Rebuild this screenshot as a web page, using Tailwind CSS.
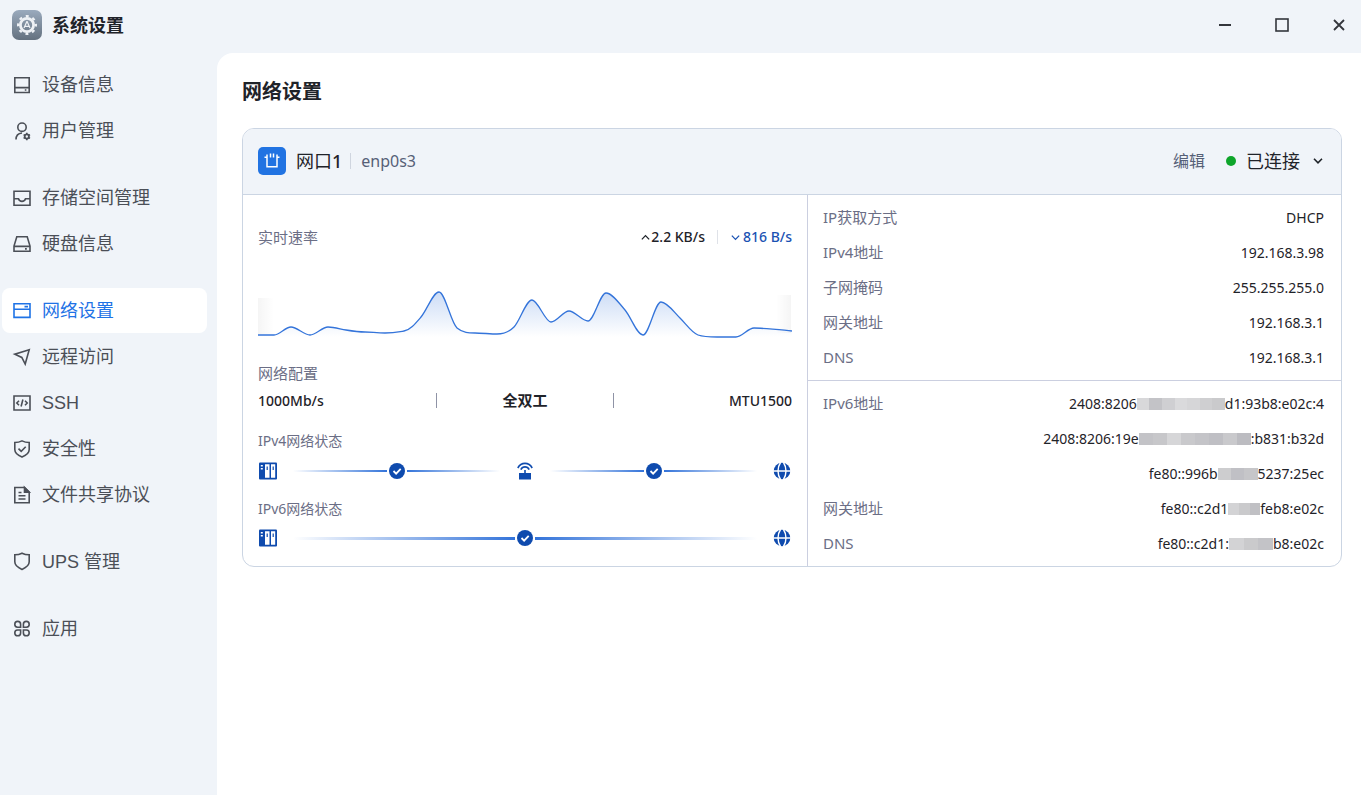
<!DOCTYPE html>
<html lang="zh-CN">
<head>
  <meta charset="UTF-8" />
  <meta name="viewport" content="width=device-width, initial-scale=1.0" />
  <title>系统设置</title>
  <script src="https://cdn.jsdelivr.net/npm/@tailwindcss/browser@4"></script>
</head>
<body class="min-h-screen flex flex-col bg-[#f0f4f9] text-[#1f2329] font-['Noto_Sans','Noto_Sans_CJK_SC',sans-serif]">

  <!-- 标题栏 -->
  <header class="h-[53px] shrink-0 flex items-center justify-between pl-3 pb-1">
    <div class="flex items-center gap-[10px]">
      <svg class="size-[30px]" viewBox="0 0 30 30">
        <defs>
          <linearGradient id="logoBg" x1="0" y1="0" x2="0" y2="1">
            <stop offset="0" stop-color="#9aaabd" />
            <stop offset="1" stop-color="#64717f" />
          </linearGradient>
        </defs>
        <rect width="30" height="30" rx="7" fill="url(#logoBg)" />
        <circle cx="15" cy="15" r="6.6" fill="none" stroke="#eef1f5" stroke-width="2.8" />
        <circle cx="15" cy="15" r="8.9" fill="none" stroke="#eef1f5" stroke-width="2.2" stroke-dasharray="3 3.99" stroke-dashoffset="1.5" />
        <path d="M15 11.2 12 18M15 11.2 18 18M12.8 16.4h4.4" fill="none" stroke="#eef1f5" stroke-width="1.2" />
      </svg>
      <span class="text-lg leading-6 font-bold">系统设置</span>
    </div>
    <div class="flex items-center gap-[13px] text-[#33363c]">
      <button class="w-11 h-8 flex items-center justify-center" aria-label="最小化">
        <svg class="size-[14px]" viewBox="0 0 14 14" stroke="currentColor" stroke-width="2"><path d="M1 7h12" /></svg>
      </button>
      <button class="w-11 h-8 flex items-center justify-center" aria-label="最大化">
        <svg class="size-[14px]" viewBox="0 0 14 14" fill="none" stroke="currentColor" stroke-width="1.6"><rect x="1" y="1" width="12" height="12" /></svg>
      </button>
      <button class="w-11 h-8 flex items-center justify-center" aria-label="关闭">
        <svg class="size-[14px]" viewBox="0 0 14 14" fill="none" stroke="currentColor" stroke-width="1.8"><path d="m2 2 10 10M12 2 2 12" /></svg>
      </button>
    </div>
  </header>

  <div class="flex-1 flex">
    <!-- 侧边栏 -->
    <nav class="w-[217px] shrink-0 pt-[9px] pl-[2px] pr-[10px] flex flex-col gap-[22px] text-lg text-[#4b4f57] font-['Liberation_Sans','Noto_Sans_CJK_SC',sans-serif]">
      <div class="flex flex-col gap-px">
        <a href="#" class="h-[45px] px-[10px] flex items-center gap-[10px] rounded-lg">
          <svg class="size-5" viewBox="0 0 20 20" fill="none" stroke="currentColor" stroke-width="1.6"><path d="M2.8 2.8h14.4v14.7H2.8zM2.8 12.6h14.4M12.8 15h1.6" /></svg>
          设备信息
        </a>
        <a href="#" class="h-[45px] px-[10px] flex items-center gap-[10px] rounded-lg">
          <svg class="size-5" viewBox="0 0 20 20" fill="none" stroke="currentColor" stroke-width="1.6"><circle cx="10" cy="6.2" r="4.2" /><path d="M4 18.5c0-4 2.5-6.2 6-6.5" /><circle cx="14.8" cy="15.5" r="2.1" stroke-width="1.8" /><path d="M14.8 11.8v7.4M11.6 13.65l6.4 3.7M18 13.65l-6.4 3.7" stroke-dasharray="1.3 4.8" /></svg>
          用户管理
        </a>
      </div>
      <div class="flex flex-col gap-px">
        <a href="#" class="h-[45px] px-[10px] flex items-center gap-[10px] rounded-lg">
          <svg class="size-5" viewBox="0 0 20 20" fill="none" stroke="currentColor" stroke-width="1.6"><path d="M2 3.2h16v14H2zM2 10.8h4.5c.5 1.6 1.800 2.600 3.500 2.600s3-1 3.500-2.600H18" /></svg>
          存储空间管理
        </a>
        <a href="#" class="h-[45px] px-[10px] flex items-center gap-[10px] rounded-lg">
          <svg class="size-5" viewBox="0 0 20 20" fill="none" stroke="currentColor" stroke-width="1.6"><path d="M4.8 2.800h10.400L18 12v5.200H2V12zM2 12.400h16M13 14.900h1.800" /></svg>
          硬盘信息
        </a>
      </div>
      <div class="flex flex-col gap-px">
        <a href="#" class="h-[45px] px-[10px] flex items-center gap-[10px] rounded-lg bg-white text-[#1f73e6]" aria-current="page">
          <svg class="size-5" viewBox="0 0 20 20" fill="none" stroke="currentColor" stroke-width="1.6"><path d="M2 2.800h16v13.600H2zM2 8.300h16M12.500 5.600H16" /></svg>
          网络设置
        </a>
        <a href="#" class="h-[45px] px-[10px] flex items-center gap-[10px] rounded-lg">
          <svg class="size-5" viewBox="0 0 20 20" fill="none" stroke="currentColor" stroke-width="1.6"><path d="M17.2 2.800 2.800 7.200l7 3.200 3.400 6.600z" /></svg>
          远程访问
        </a>
        <a href="#" class="h-[45px] px-[10px] flex items-center gap-[10px] rounded-lg">
          <svg class="size-5" viewBox="0 0 20 20" fill="none" stroke="currentColor" stroke-width="1.6"><path d="M2 3h16v14H2z" /><path d="M7 7.800 4.800 10 7 12.200M13 7.800l2.200 2.200-2.200 2.200M10.900 6.500l-1.800 7" /></svg>
          SSH
        </a>
        <a href="#" class="h-[45px] px-[10px] flex items-center gap-[10px] rounded-lg">
          <svg class="size-5" viewBox="0 0 20 20" fill="none" stroke="currentColor" stroke-width="1.6"><path d="M10 1.900c2.200 1.100 4.600 1.600 7.200 1.600v7c0 3.400-3 5.800-7.200 7.600-4.200-1.800-7.200-4.200-7.200-7.600v-7c2.600 0 5-.5 7.200-1.600z" /><path d="m6.500 9.600 2.700 2.700 4.500-4.500" /></svg>
          安全性
        </a>
        <a href="#" class="h-[45px] px-[10px] flex items-center gap-[10px] rounded-lg">
          <svg class="size-5" viewBox="0 0 20 20" fill="none" stroke="currentColor" stroke-width="1.6"><path d="M2.800 2.500h9.700l4.700 4.700v10.600H2.800zM6.500 7.500h3M6.500 10.800h7M6.500 14h7" /><path d="M12.500 2.500v4.700h4.700z" fill="currentColor" /></svg>
          文件共享协议
        </a>
      </div>
      <a href="#" class="h-[45px] px-[10px] flex items-center gap-[10px] rounded-lg">
        <svg class="size-5" viewBox="0 0 20 20" fill="none" stroke="currentColor" stroke-width="1.6"><path d="M10 1.200c2.200 1.100 4.600 1.600 7.200 1.600v7c0 3.400-3 5.800-7.200 7.600-4.200-1.800-7.200-4.200-7.200-7.600v-7c2.600 0 5-.5 7.200-1.600z" /></svg>
        UPS 管理
      </a>
      <a href="#" class="h-[45px] px-[10px] flex items-center gap-[10px] rounded-lg">
        <svg class="size-5" viewBox="0 0 20 20" fill="none" stroke="currentColor" stroke-width="1.6"><path d="M8.600 8.200H5.600a2.900 2.900 0 1 1 3-2.900zM11.400 8.200h3a2.900 2.900 0 1 0-3-2.900zM8.600 11H5.600a2.900 2.900 0 1 0 3 2.900zM11.400 11h3a2.900 2.900 0 1 1-3 2.900z" /></svg>
        应用
      </a>
    </nav>

    <!-- 主内容 -->
    <main class="flex-1 min-w-0 bg-white rounded-tl-2xl pl-[25px] pr-[19px] pt-6">
      <h1 class="text-xl leading-[30px] font-bold">网络设置</h1>

      <section class="mt-[21px] border border-[#cbd5e3] rounded-xl overflow-hidden">
        <!-- 网口标题 -->
        <div class="h-[66px] pl-[15px] pr-[17px] pb-px flex items-center justify-between bg-[#f0f4f9] border-b border-[#cbd5e3]">
          <div class="flex items-center">
            <svg class="size-7" viewBox="0 0 28 28" fill="none" stroke="#fff" stroke-width="1.5">
              <rect width="28" height="28" rx="5" fill="#2173e2" stroke="none" />
              <path d="M6.500 10.300H9v9.400h10v-9.400h2.500M9 10.300V7.500M19 10.300V7.500M12.500 6.500v4M15.500 6.500v4" />
            </svg>
            <h2 class="ml-[10px] text-lg">网口<span class="font-medium">1</span></h2>
            <span class="ml-[8px] h-4 border-l border-[#cfd5df]"></span>
            <span class="ml-[10px] text-base text-[#566077]">enp0s3</span>
          </div>
          <div class="flex items-center">
            <button class="text-base text-[#566077]">编辑</button>
            <span class="ml-[21px] size-[10px] rounded-full bg-[#0ea52b]"></span>
            <button class="ml-[10px] flex items-center gap-3 text-lg">
              已连接
              <svg class="size-3" viewBox="0 0 12 12" fill="none" stroke="currentColor" stroke-width="1.6"><path d="m2 3.800 4 4 4-4" /></svg>
            </button>
          </div>
        </div>

        <div class="grid grid-cols-[565fr_533fr]">
          <!-- 左侧：速率与状态 -->
          <div class="px-[15px] pt-[30px] pb-[18px] border-r border-[#cbcfe0]">
            <div class="h-6 flex items-center justify-between">
              <span class="text-[15px] text-[#6b6e85]">实时速率</span>
              <div class="flex items-center text-sm font-medium">
                <svg class="size-[11px]" viewBox="0 0 12 12" fill="none" stroke="currentColor" stroke-width="1.4"><path d="m2 8 4-4 4 4" /></svg>
                <span>2.2 KB/s</span>
                <span class="mx-[12px] h-[14px] border-l border-[#dfe2e8]"></span>
                <span class="flex items-center gap-[2px] text-[#1a52b3]">
                  <svg class="size-[11px]" viewBox="0 0 12 12" fill="none" stroke="currentColor" stroke-width="1.4"><path d="m2 4 4 4 4-4" /></svg>
                  816 B/s
                </span>
              </div>
            </div>

            <!-- 速率曲线 -->
            <svg class="mt-9 w-full h-[60px]" viewBox="0 0 534 60" preserveAspectRatio="none">
              <defs>
                <linearGradient id="area" gradientUnits="userSpaceOnUse" x1="0" y1="5" x2="0" y2="52">
                  <stop offset="0" stop-color="#3474da" stop-opacity=".26" />
                  <stop offset="1" stop-color="#3474da" stop-opacity="0" />
                </linearGradient>
                <linearGradient id="fadeL">
                  <stop offset="0" stop-color="#000" stop-opacity=".04" />
                  <stop offset="1" stop-color="#000" stop-opacity="0" />
                </linearGradient>
                <linearGradient id="fadeR">
                  <stop offset="0" stop-color="#000" stop-opacity="0" />
                  <stop offset="1" stop-color="#000" stop-opacity=".04" />
                </linearGradient>
              </defs>
              <rect x="0" y="13" width="16" height="36" fill="url(#fadeL)" />
              <rect x="518" y="10" width="15" height="38" fill="url(#fadeR)" />
              <path fill="url(#area)" d="M0 50H16C22 50 27 42 33 42S46 50 52 50 64 42 70 42 82 44 88 45 101 47 107 47 119 48 127 48 140 47 146 46 157 39 163 32 175 7 181 7 193 38 199 43 211 48 217 48 233 49 239 49 250 48 256 42 268 15 274 15 287 37 293 37 305 26 311 26 324 36 330 36 342 8 348 8 361 18 367 25 379 50 385 50 397 17 403 17 416 27 422 33 434 48 440 50 453 52 459 52 472 52 478 52 490 43 496 43 527 45 534 46V60H0z" />
              <path fill="none" stroke="#3474da" stroke-width="1.3" d="M0 50H16C22 50 27 42 33 42S46 50 52 50 64 42 70 42 82 44 88 45 101 47 107 47 119 48 127 48 140 47 146 46 157 39 163 32 175 7 181 7 193 38 199 43 211 48 217 48 233 49 239 49 250 48 256 42 268 15 274 15 287 37 293 37 305 26 311 26 324 36 330 36 342 8 348 8 361 18 367 25 379 50 385 50 397 17 403 17 416 27 422 33 434 48 440 50 453 52 459 52 472 52 478 52 490 43 496 43 527 45 534 46" />
            </svg>

            <h3 class="mt-[15px] text-[15px] leading-[27px] text-[#6b6e85]">网络配置</h3>
            <div class="h-[27px] grid grid-cols-3 items-center text-sm font-medium">
              <span>1000Mb/s</span>
              <span class="h-[15px] flex items-center justify-center border-x border-[#8f93a6] text-[15px] font-bold">全双工</span>
              <span class="text-right">MTU1500</span>
            </div>

            <h3 class="mt-[15px] text-sm leading-6 text-[#6b6e85]">IPv4网络状态</h3>
            <div class="mt-2 h-5 flex items-center text-[#0f4bae]">
              <svg class="size-5" viewBox="0 0 20 20"><use href="#nas" /></svg>
              <span class="ml-[15px] flex-1 h-[2px] bg-linear-to-r from-transparent to-[#3474da]"></span>
              <svg class="mx-[2px] size-4" viewBox="0 0 16 16"><use href="#ok" /></svg>
              <span class="mr-[15px] flex-1 h-[2px] bg-linear-to-l from-transparent to-[#3474da]"></span>
              <svg class="size-5" viewBox="0 0 20 20"><use href="#router" /></svg>
              <span class="ml-[15px] flex-1 h-[2px] bg-linear-to-r from-transparent to-[#3474da]"></span>
              <svg class="mx-[2px] size-4" viewBox="0 0 16 16"><use href="#ok" /></svg>
              <span class="mr-[15px] flex-1 h-[2px] bg-linear-to-l from-transparent to-[#3474da]"></span>
              <svg class="size-5" viewBox="0 0 20 20"><use href="#globe" /></svg>
            </div>

            <h3 class="mt-4 text-sm leading-6 text-[#6b6e85]">IPv6网络状态</h3>
            <div class="mt-[7px] h-5 flex items-center text-[#0f4bae]">
              <svg class="size-5" viewBox="0 0 20 20"><use href="#nas" /></svg>
              <span class="ml-[15px] flex-1 h-[3px] bg-linear-to-r from-transparent to-[#3474da]"></span>
              <svg class="mx-[2px] size-4" viewBox="0 0 16 16"><use href="#ok" /></svg>
              <span class="mr-[15px] flex-1 h-[3px] bg-linear-to-l from-transparent to-[#3474da]"></span>
              <svg class="size-5" viewBox="0 0 20 20"><use href="#globe" /></svg>
            </div>
          </div>

          <!-- 右侧：地址信息 -->
          <div class="text-sm">
            <dl class="py-[5px] pl-[15px] pr-[17px] border-b border-[#cbcfe0]">
              <div class="h-[35px] flex items-center justify-between"><dt class="text-[15px] text-[#6b6e85]">IP获取方式</dt><dd>DHCP</dd></div>
              <div class="h-[35px] flex items-center justify-between"><dt class="text-[15px] text-[#6b6e85]">IPv4地址</dt><dd>192.168.3.98</dd></div>
              <div class="h-[35px] flex items-center justify-between"><dt class="text-[15px] text-[#6b6e85]">子网掩码</dt><dd>255.255.255.0</dd></div>
              <div class="h-[35px] flex items-center justify-between"><dt class="text-[15px] text-[#6b6e85]">网关地址</dt><dd>192.168.3.1</dd></div>
              <div class="h-[35px] flex items-center justify-between"><dt class="text-[15px] text-[#6b6e85]">DNS</dt><dd>192.168.3.1</dd></div>
            </dl>
            <!-- IPv6 地址中段打码 -->
            <dl class="py-[5px] pl-[15px] pr-[17px]">
              <div class="h-[35px] flex items-center justify-between">
                <dt class="text-[15px] text-[#6b6e85]">IPv6地址</dt>
                <dd class="flex items-center">2408:8206<span class="flex h-3 w-[88px]"><i class="flex-1 bg-[#d8d8da]"></i><i class="flex-1 bg-[#c3c3c7]"></i><i class="flex-1 bg-[#cfcfd2]"></i><i class="flex-1 bg-[#dadadc]"></i><i class="flex-1 bg-[#d6d6d8]"></i><i class="flex-1 bg-[#cfcfd1]"></i><i class="flex-1 bg-[#cacacc]"></i></span>d1:93b8:e02c:4</dd>
              </div>
              <div class="h-[35px] flex items-center justify-end">
                <dd class="flex items-center">2408:8206:19e<span class="flex h-3 w-28"><i class="flex-1 bg-[#c3c3c7]"></i><i class="flex-1 bg-[#c7c7ca]"></i><i class="flex-1 bg-[#d6d6d8]"></i><i class="flex-1 bg-[#c9c9cc]"></i><i class="flex-1 bg-[#c4c4c8]"></i><i class="flex-1 bg-[#bfbfc4]"></i><i class="flex-1 bg-[#c9c9cc]"></i><i class="flex-1 bg-[#bcbcc1]"></i></span>:b831:b32d</dd>
              </div>
              <div class="h-[35px] flex items-center justify-end">
                <dd class="flex items-center">fe80::996b<span class="flex h-3 w-10"><i class="flex-1 bg-[#cdcdcf]"></i><i class="flex-1 bg-[#c0c0c5]"></i><i class="flex-1 bg-[#c6c6c9]"></i></span>5237:25ec</dd>
              </div>
              <div class="h-[35px] flex items-center justify-between">
                <dt class="text-[15px] text-[#6b6e85]">网关地址</dt>
                <dd class="flex items-center">fe80::c2d1<span class="flex h-3 w-8"><i class="flex-1 bg-[#d3d3d5]"></i><i class="flex-1 bg-[#cacacc]"></i><i class="flex-1 bg-[#c0c0c4]"></i></span>feb8:e02c</dd>
              </div>
              <div class="h-[35px] flex items-center justify-between">
                <dt class="text-[15px] text-[#6b6e85]">DNS</dt>
                <dd class="flex items-center">fe80::c2d1:<span class="flex h-3 w-11"><i class="flex-1 bg-[#d3d3d5]"></i><i class="flex-1 bg-[#cacacc]"></i><i class="flex-1 bg-[#c3c3c7]"></i></span>b8:e02c</dd>
              </div>
            </dl>
          </div>
        </div>
      </section>
    </main>
  </div>

  <!-- 状态图标 -->
  <svg class="hidden">
    <symbol id="nas" viewBox="0 0 20 20">
      <rect x="1" y="1.5" width="18" height="17" rx="1" fill="currentColor" />
      <path d="M7 3.200h4.500v13.600H7zM13 3.200h4.200v13.600H13zM2.800 4h2v1.500h-2zM2.800 7h2v1.500h-2z" fill="#fff" />
      <path d="M9.200 5.500V9M15.200 5.500V9" stroke="currentColor" stroke-width="1.2" />
    </symbol>
    <symbol id="ok" viewBox="0 0 16 16">
      <circle cx="8" cy="8" r="8" fill="currentColor" />
      <path d="m4.500 8 2.600 2.600 4.600-4.800" fill="none" stroke="#fff" stroke-width="1.8" />
    </symbol>
    <symbol id="router" viewBox="0 0 20 20">
      <path d="M4 12h5.200V9h1.600v3H16v6.500H4z" fill="currentColor" />
      <path d="M2.800 7C4.500 3.900 7 2.400 10 2.400S15.500 3.900 17.200 7M5.800 8.600C6.800 6.700 8.200 5.900 10 5.900s3.200.8 4.200 2.700" fill="none" stroke="currentColor" stroke-width="1.6" />
    </symbol>
    <symbol id="globe" viewBox="0 0 20 20">
      <circle cx="10" cy="10" r="8.300" fill="currentColor" />
      <path d="M1 10h18" stroke="#fff" stroke-width="1.5" />
      <path d="M8.500 1.500c-3.300 5-3.300 12 0 17M11.500 1.500c3.300 5 3.300 12 0 17" fill="none" stroke="#fff" stroke-width="1.4" />
    </symbol>
  </svg>
</body>
</html>
